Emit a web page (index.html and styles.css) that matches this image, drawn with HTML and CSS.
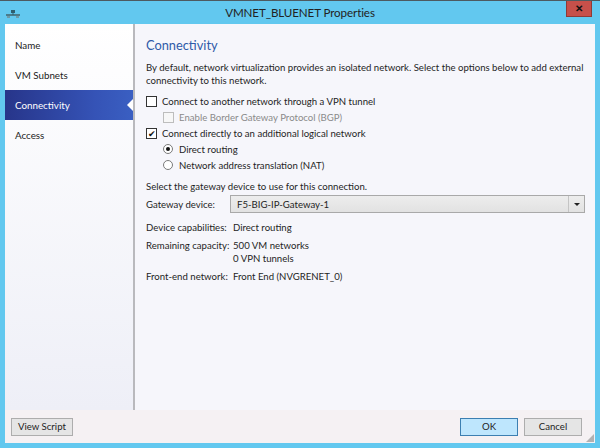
FILE: index.html
```html
<!DOCTYPE html>
<html lang="en">
<head>
  <meta charset="UTF-8" />
  <title>VMNET_BLUENET Properties</title>
  <link rel="stylesheet" href="styles.css">
</head>
<body>
  <div class="window">
    <!-- title bar -->
    <div class="titlebar">
      <svg class="app-icon" width="14" height="8" viewBox="0 0 14 8">
        <rect x="0" y="4" width="14" height="2" fill="#4a7c8c"/>
        <rect x="5" y="0" width="4" height="3" fill="#2f5f6f"/>
        <rect x="6.5" y="2" width="1" height="3" fill="#2f5f6f"/>
        <rect x="1" y="6" width="3" height="2" fill="#6d9aa8"/>
        <rect x="10" y="6" width="3" height="2" fill="#6d9aa8"/>
      </svg>
      <div class="title">VMNET_BLUENET Properties</div>
      <div class="close-btn">&#x2715;</div>
    </div>

    <div class="client">
      <div class="main">
        <ul class="nav">
          <li>Name</li>
          <li>VM Subnets</li>
          <li class="selected">Connectivity</li>
          <li>Access</li>
        </ul>

        <div class="content">
          <h2>Connectivity</h2>
          <p class="intro">By default, network virtualization provides an isolated network. Select the options below to add external connectivity to this network.</p>

          <div class="opt"><span class="check"></span>Connect to another network through a VPN tunnel</div>
          <div class="opt sub disabled"><span class="check"></span>Enable Border Gateway Protocol (BGP)</div>
          <div class="opt"><span class="check checked">&#x2714;</span>Connect directly to an additional logical network</div>
          <div class="opt sub"><span class="radio on"></span>Direct routing</div>
          <div class="opt sub"><span class="radio"></span>Network address translation (NAT)</div>

          <p class="hint">Select the gateway device to use for this connection.</p>

          <div class="fields">
            <div class="lbl gw">Gateway device:</div>
            <div class="combo">
              <span>F5-BIG-IP-Gateway-1</span>
              <span class="arrow"></span>
            </div>

            <div class="lbl">Device capabilities:</div>
            <div class="val">Direct routing</div>

            <div class="lbl">Remaining capacity:</div>
            <div class="val">500 VM networks<br>0 VPN tunnels</div>

            <div class="lbl">Front-end network:</div>
            <div class="val">Front End (NVGRENET_0)</div>
          </div>
        </div>
      </div>

      <div class="footer">
        <button class="btn">View Script</button>
        <div class="spacer"></div>
        <button class="btn ok">OK</button>
        <button class="btn">Cancel</button>
        <div class="grip"></div>
      </div>
    </div>
  </div>
</body>
</html>
```

FILE: styles.css
```css
body {
  margin: 0;
  padding: 0;
  background: #62c8ef;
  font-family: Lato, 'Noto Sans', sans-serif;
  font-size: 9.6px;
  color: #1e1e1e;
}

.window {
  width: 600px;
  height: 448px;
  border-top: 1px solid #4d5a60;
  box-sizing: border-box;
}

.titlebar {
  height: 23px;
  display: flex;
  align-items: center;
  position: relative;
}

.app-icon {
  margin-left: 6px;
  margin-top: 3px;
}

.title {
  flex: 1;
  text-align: center;
  font-size: 11.6px;
  letter-spacing: -0.1px;
  color: #222;
  margin-right: 20px;
}

.close-btn {
  position: absolute;
  right: 8px;
  top: 0;
  width: 24px;
  height: 15px;
  background: #c7504a;
  border: 1px solid #8f3a36;
  border-top: none;
  color: #111;
  font-size: 10px;
  font-weight: bold;
  text-align: center;
  line-height: 15px;
}

.client {
  margin: 0 5px;
  height: 419px;
  display: flex;
  flex-direction: column;
  background: #f6f6fb;
}

.main {
  flex: 1;
  display: flex;
  min-height: 0;
}

.nav {
  list-style: none;
  margin: 0;
  padding: 6px 0 0 0;
  width: 128px;
  background: linear-gradient(#ffffff, #eeeff7);
  border-right: 2px solid #b9b9bd;
}

.nav li {
  height: 30px;
  line-height: 30px;
  padding-left: 10px;
  font-size: 9.8px;
  color: #222;
  position: relative;
}

.nav li.selected {
  color: #fff;
  background: linear-gradient(to right, #27358a, #3553b6 70%, #3a5fc2);
}

.nav li.selected::after {
  content: "";
  position: absolute;
  right: 0;
  top: 9px;
  border: 6px solid transparent;
  border-right: 6px solid #fff;
}

.content {
  flex: 1;
  padding: 11px 0 0 11px;
}

.content h2 {
  margin: 0;
  font-size: 12.8px;
  font-weight: normal;
  color: #2f5aa8;
  line-height: 20px;
}

.intro {
  margin: 6px 0 6px 0;
  line-height: 13px;
  width: 446px;
}

.opt {
  display: flex;
  align-items: center;
  height: 16px;
}

.opt.sub {
  padding-left: 17px;
}

.opt.disabled {
  color: #8a8a8a;
}

.check {
  width: 9px;
  height: 9px;
  border: 1px solid #333;
  background: #fff;
  margin-right: 5px;
  font-size: 9px;
  line-height: 9px;
  text-align: center;
  color: #111;
}

.disabled .check {
  border-color: #bdbdbd;
  background: #f7f7f7;
}

.radio {
  width: 8px;
  height: 8px;
  border: 1px solid #7a7a7a;
  border-radius: 50%;
  background: #fff;
  margin-right: 6px;
  position: relative;
}

.radio.on::after {
  content: "";
  position: absolute;
  left: 2px;
  top: 2px;
  width: 4px;
  height: 4px;
  border-radius: 50%;
  background: #111;
}

.hint {
  margin: 7px 0 0 0;
  line-height: 13px;
}

.fields {
  display: grid;
  grid-template-columns: 86px 353px;
  align-items: start;
  margin-top: 2px;
  line-height: 13px;
  white-space: nowrap;
}

.lbl {
  margin-bottom: 5px;
}

.lbl.gw {
  margin-top: 3px;
  margin-bottom: 10px;
}

.val {
  margin-left: 1px;
  margin-bottom: 5px;
}

.combo {
  height: 16px;
  margin-left: -2px;
  border: 1px solid #a9a9a9;
  background: linear-gradient(#ededed, #e2e2e2);
  display: flex;
  align-items: center;
  padding-left: 6px;
}

.combo span:first-child {
  flex: 1;
}

.combo .arrow {
  width: 15px;
  height: 16px;
  border-left: 1px solid #c4c4c4;
  position: relative;
}

.combo .arrow::after {
  content: "";
  position: absolute;
  left: 5px;
  top: 7px;
  border: 3px solid transparent;
  border-top: 3px solid #222;
}

.footer {
  height: 33px;
  background: #f5f1f3;
  display: flex;
  align-items: center;
  padding: 0 13px 0 6px;
  position: relative;
}

.spacer {
  flex: 1;
}

.btn {
  height: 18px;
  min-width: 58px;
  padding: 0 6px;
  font-family: inherit;
  font-size: 9.6px;
  color: #1e1e1e;
  background: #e5e5e5;
  border: 1px solid #adadad;
  border-radius: 0;
  margin-left: 6px;
}

.footer .btn:first-child {
  margin-left: 0;
}

.btn.ok {
  background: #bee6fd;
  border-color: #3c7fb1;
}

.grip {
  position: absolute;
  right: 1px;
  bottom: 1px;
  width: 8px;
  height: 8px;
  background: radial-gradient(circle, #9a9a9a 0.6px, transparent 1px) 0 0 / 2px 2px;
  clip-path: polygon(100% 0, 100% 100%, 0 100%);
}
```
